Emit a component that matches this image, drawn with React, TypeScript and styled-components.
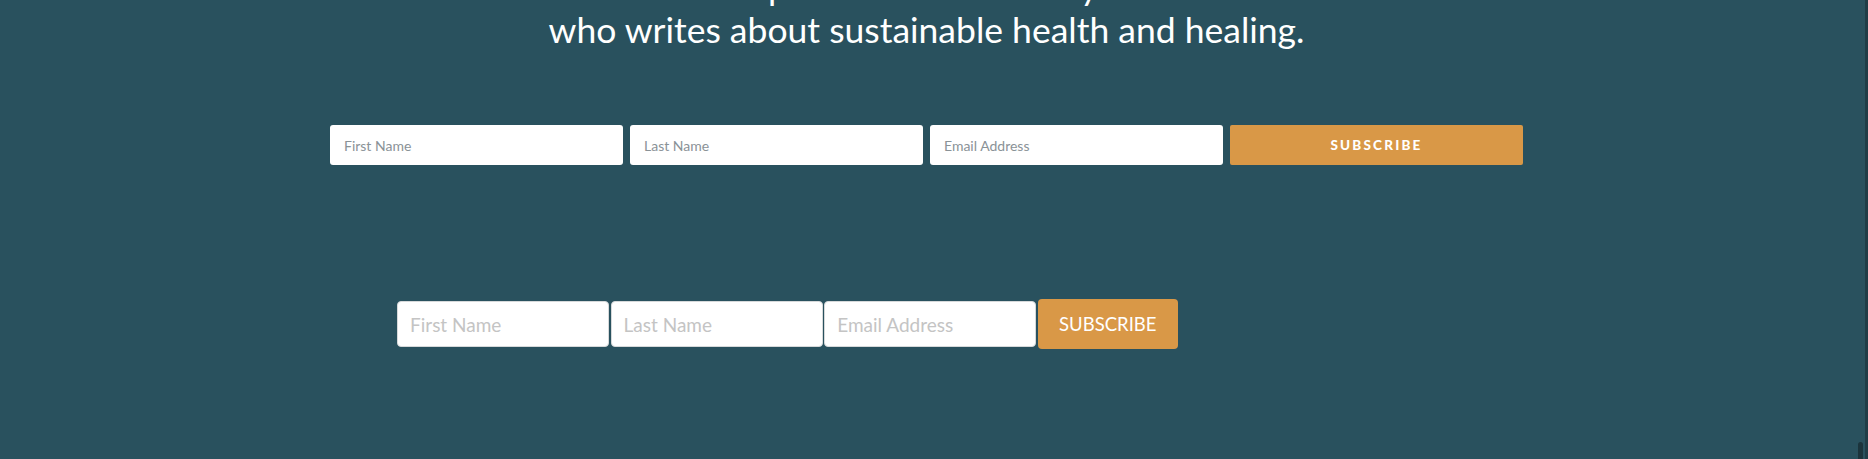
import React from "react";
import styled, { createGlobalStyle } from "styled-components";

const Global = createGlobalStyle`
  html, body { margin: 0; padding: 0; }
  body {
    background: #29515e;
    font-family: Lato, "Noto Sans", sans-serif;
    overflow: hidden;
  }
`;

const Page = styled.div`
  width: calc(100% - 15px);
  height: 459px;
  display: flex;
  flex-direction: column;
  align-items: center;
`;

const Heading = styled.h2`
  margin: -35px 0 0;
  color: #ffffff;
  font-family: Lato, "Noto Sans", sans-serif;
  font-weight: 400;
  font-size: 35.5px;
  line-height: 43px;
  text-align: center;
`;

const WideForm = styled.form`
  display: grid;
  grid-template-columns: repeat(4, 293px);
  gap: 7px;
  margin-top: 74px;
`;

const WideInput = styled.input`
  box-sizing: border-box;
  height: 40px;
  border: none;
  border-radius: 3px;
  background: #fff;
  padding: 0 14px;
  font-family: Lato, "Noto Sans", sans-serif;
  font-size: 14px;
  color: #333;
  &::placeholder { color: #8a9297; }
`;

const WideButton = styled.button`
  height: 40px;
  border: none;
  border-radius: 2px;
  background: #d99847;
  color: #fff;
  font-family: Lato, "Noto Sans", sans-serif;
  font-weight: 900;
  font-size: 13.5px;
  letter-spacing: 2.2px;
  text-transform: uppercase;
`;

const CompactForm = styled.form`
  align-self: flex-start;
  display: flex;
  align-items: center;
  gap: 1.6px;
  margin: 134px 0 0 397px;
`;

const CompactInput = styled.input`
  box-sizing: border-box;
  width: 212px;
  height: 46px;
  border: 1px solid #d6d9da;
  border-radius: 4px;
  background: #fff;
  padding: 0 12px;
  font-family: Lato, "Noto Sans", sans-serif;
  font-size: 19px;
  color: #333;
  &::placeholder { color: #c4c4c4; }
`;

const CompactButton = styled.button`
  width: 140px;
  height: 50px;
  border: none;
  border-radius: 4px;
  background: #d99847;
  color: #fff;
  font-family: Lato, "Noto Sans", sans-serif;
  font-size: 18.5px;
  font-weight: 400;
`;

const ScrollEdge = styled.div`
  position: fixed;
  top: 0;
  right: 0;
  width: 3px;
  height: 100%;
  background: #1f3d47;
`;

const ScrollThumb = styled.div`
  position: fixed;
  right: 5px;
  bottom: 0;
  width: 5px;
  height: 17px;
  border-radius: 3px 3px 0 0;
  background: #1b343c;
`;

export default function App() {
  return (
    <>
      <Global />
      <Page>
        <Heading>
          Annie is a health practitioner and busy mother of three
          <br />
          who writes about sustainable health and healing.
        </Heading>
        <WideForm onSubmit={(e) => e.preventDefault()}>
          <WideInput placeholder="First Name" />
          <WideInput placeholder="Last Name" />
          <WideInput placeholder="Email Address" />
          <WideButton type="submit">Subscribe</WideButton>
        </WideForm>
        <CompactForm onSubmit={(e) => e.preventDefault()}>
          <CompactInput placeholder="First Name" />
          <CompactInput placeholder="Last Name" />
          <CompactInput placeholder="Email Address" />
          <CompactButton type="submit">SUBSCRIBE</CompactButton>
        </CompactForm>
      </Page>
      <ScrollEdge />
      <ScrollThumb />
    </>
  );
}
